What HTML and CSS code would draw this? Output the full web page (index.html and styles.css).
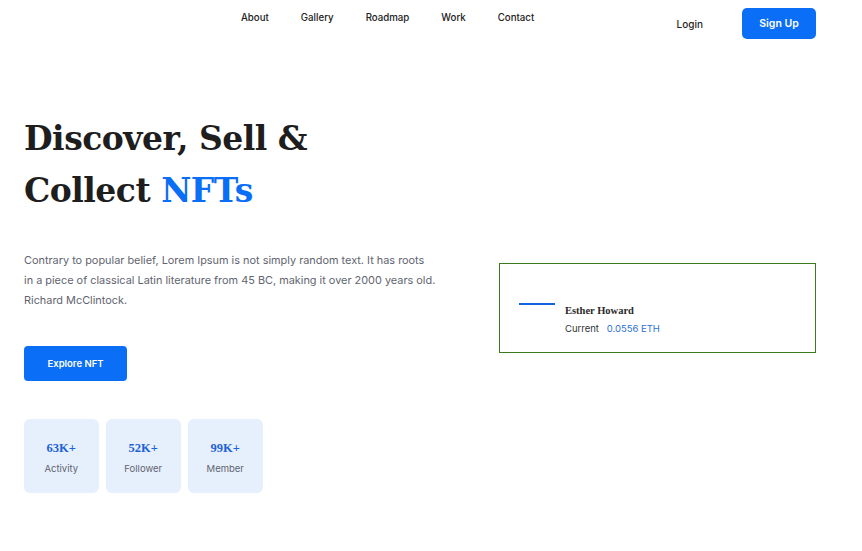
FILE: index.html
```html
<!DOCTYPE html>
<html lang="en">
<head>
    <meta charset="UTF-8">
    <meta name="viewport" content="width=device-width, initial-scale=1.0">
    <title>NFT Market</title>
    <link rel="stylesheet" href="styles.css">
</head>
<body>
    <header class="topbar">
        <nav class="menu">
            <a href="#">About</a>
            <a href="#">Gallery</a>
            <a href="#">Roadmap</a>
            <a href="#">Work</a>
            <a href="#">Contact</a>
        </nav>
        <div class="actions">
            <a href="#" class="login">Login</a>
            <a href="#" class="signup">Sign Up</a>
        </div>
    </header>

    <main class="hero">
        <div class="hero_left">
            <h1 class="title">Discover, Sell &amp;<br>Collect <span class="blue">NFTs</span></h1>
            <p class="intro">Contrary to popular belief, Lorem Ipsum is not simply random text. It has roots in a piece of classical Latin literature from 45 BC, making it over 2000 years old. Richard McClintock.</p>
            <a href="#" class="explore">Explore NFT</a>
            <div class="stats">
                <div class="stat">
                    <b>63K+</b>
                    <span>Activity</span>
                </div>
                <div class="stat">
                    <b>52K+</b>
                    <span>Follower</span>
                </div>
                <div class="stat">
                    <b>99K+</b>
                    <span>Member</span>
                </div>
            </div>
        </div>

        <div class="bid_card">
            <div class="line"></div>
            <div class="owner">
                <h4>Esther Howard</h4>
                <p>Current <span class="price">0.0556 ETH</span></p>
            </div>
        </div>
    </main>
</body>
</html>
```

FILE: styles.css
```css
body{
    margin: 0;
    font-family: "Inter", "Noto Sans", sans-serif;
    color: #1f1f1f;
    background: white;
}
a{
    text-decoration: none;
    color: inherit;
}
.topbar{
    display: flex;
    flex-direction: row;
    align-items: flex-start;
    padding: 8px 46px 0 24px;
}
.menu{
    flex: 1;
    display: flex;
    gap: 32px;
    padding-left: 217px;
    padding-top: 4px;
    font-size: 9.7px;
    font-weight: 500;
    color: #222;
}
.actions{
    display: flex;
    align-items: center;
    gap: 39px;
}
.login{
    font-size: 10px;
    font-weight: 500;
}
.signup{
    display: block;
    width: 74px;
    height: 31px;
    line-height: 31px;
    text-align: center;
    background-color: #0a6ef7;
    color: white;
    font-size: 10.5px;
    font-weight: 600;
    border-radius: 5px;
}

.hero{
    display: flex;
    flex-direction: row;
    justify-content: space-between;
    align-items: flex-start;
    padding: 0 46px 0 24px;
    margin-top: 74px;
}
.hero_left{
    width: 440px;
}
.title{
    margin: 0;
    font-family: "DejaVu Serif", "Liberation Serif", serif;
    font-size: 33px;
    letter-spacing: -0.5px;
    line-height: 52px;
    font-weight: bold;
    color: #1e1e1e;
}
.blue{
    color: #0a6ef7;
}
.intro{
    margin: 33px 0 0 0;
    width: 412px;
    font-size: 10.9px;
    line-height: 20px;
    color: #5f6570;
}
.explore{
    display: inline-block;
    margin-top: 36px;
    width: 103px;
    height: 35px;
    line-height: 35px;
    text-align: center;
    background-color: #0a6ef7;
    color: white;
    font-size: 9.5px;
    font-weight: 600;
    border-radius: 4px;
}
.stats{
    display: flex;
    gap: 7.5px;
    margin-top: 38px;
}
.stat{
    box-sizing: border-box;
    width: 74.5px;
    height: 74px;
    padding-top: 3px;
    border-radius: 6px;
    background-color: #e6effc;
    display: flex;
    flex-direction: column;
    justify-content: center;
    align-items: center;
    gap: 7px;
}
.stat b{
    font-family: "Liberation Serif", "DejaVu Serif", serif;
    font-size: 12.5px;
    color: #1d62d6;
}
.stat span{
    font-size: 9.5px;
    color: #5f6570;
}

.bid_card{
    box-sizing: border-box;
    width: 317px;
    height: 90px;
    border: 1px solid #3c7a1c;
    display: flex;
    flex-direction: row;
    align-items: flex-start;
    padding: 0 0 0 19px;
    margin-top: 150px;
}
.line{
    width: 36px;
    height: 2px;
    background-color: #1264e0;
    margin-right: 10px;
    margin-top: 39px;
}
.owner{
    margin-top: 41px;
}
.owner h4{
    margin: 0;
    font-family: "Liberation Serif", "DejaVu Serif", serif;
    font-size: 10.5px;
    font-weight: bold;
    color: #2a2a2a;
}
.owner p{
    margin: 7px 0 0 0;
    font-size: 9.5px;
    color: #333;
}
.price{
    margin-left: 5px;
    color: #2a6fd8;
}
```
